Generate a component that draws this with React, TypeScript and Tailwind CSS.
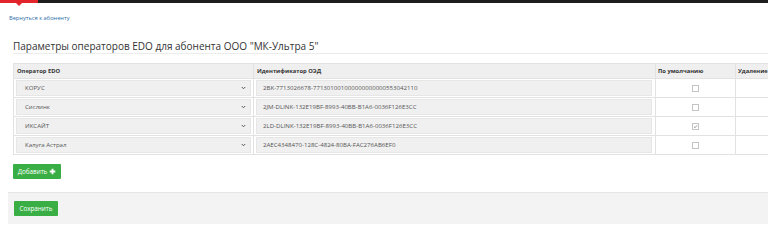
const rows = [
  { op: 'КОРУС', id: '2BK-7713026678-771301001000000000000553042110', def: false },
  { op: 'Сислинк', id: '2JM-DLINK-132E19BF-8993-40BB-B1A6-0036F126E3CC', def: false },
  { op: 'ИКСАЙТ', id: '2LD-DLINK-132E19BF-8993-40BB-B1A6-0036F126E3CC', def: true },
  { op: 'Калуга Астрал', id: '2AEC4348470-128C-4824-80BA-FAC276AB6EF0', def: false },
];

const Chevron = () => (
  <svg width="5" height="4" viewBox="0 0 10 8" className="shrink-0">
    <path d="M1.5 2 L5 5.5 L8.5 2" fill="none" stroke="#555" strokeWidth="2" />
  </svg>
);

const Check = ({ on }: { on: boolean }) => (
  <div className="w-[7px] h-[7px] border border-[#c4c4c4] bg-white flex items-center justify-center">
    {on && (
      <svg width="5" height="5" viewBox="0 0 10 10">
        <path d="M2 5.5 L4.2 7.5 L8 2.5" fill="none" stroke="#777" strokeWidth="1.4" />
      </svg>
    )}
  </div>
);

export default function App() {
  return (
    <div className="w-[768px] h-[242px] overflow-hidden bg-white font-['Open_Sans',sans-serif] text-[#333]">
      <div className="flex h-[3px]">
        <div className="w-[38px] bg-[#e3242b] relative">
          <span className="absolute left-[16px] top-[3px] w-0 h-0 border-l-[3px] border-r-[3px] border-t-[3px] border-l-transparent border-r-transparent border-t-[#e3242b]" />
        </div>
        <div className="flex-1 bg-[#1e1e1e]" />
      </div>

      <div className="pl-[9px] pt-[11px] text-[5.7px] leading-[8px] text-[#2c6ea8]">Вернуться к абоненту</div>

      <div className="ml-[13px] mt-[18px] border-b border-[#ececec] text-[10px] leading-[13px] text-[#333]">
        Параметры операторов EDO для абонента ООО "МК-Ультра 5"
      </div>

      <table className="ml-[13px] mt-[9px] border-collapse table-fixed w-[800px] text-[6.1px]">
        <colgroup>
          <col className="w-[240px]" />
          <col className="w-[402px]" />
          <col className="w-[80px]" />
          <col className="w-[78px]" />
        </colgroup>
        <thead>
          <tr className="bg-[#efefef] h-[15px] text-[5.8px]">
            <th className="border border-[#e2e2e2] text-left font-bold px-[3px] text-[#333]">Оператор EDO</th>
            <th className="border border-[#e2e2e2] text-left font-bold px-[3px] text-[#333]">Идентификатор ОЭД</th>
            <th className="border border-[#e2e2e2] text-left font-bold px-[2px] text-[#333]">По умолчанию</th>
            <th className="border border-[#e2e2e2] text-left font-bold px-[2px] text-[#333]">Удаление</th>
          </tr>
        </thead>
        <tbody>
          {rows.map((r) => (
            <tr key={r.id} className="h-[19px]">
              <td className="border border-[#e2e2e2] px-[2px] py-[1px]">
                <div className="h-[16px] bg-[#f0f0f0] border border-[#e6e6e6] flex items-center justify-between pl-[8px] pr-[4px] text-[#555]">
                  <span>{r.op}</span>
                  <Chevron />
                </div>
              </td>
              <td className="border border-[#e2e2e2] px-[2px] py-[1px]">
                <div className="h-[16px] w-[396px] bg-[#f0f0f0] border border-[#e6e6e6] flex items-center pl-[6px] text-[#555]">
                  {r.id}
                </div>
              </td>
              <td className="border border-[#e2e2e2]">
                <div className="flex justify-center">
                  <Check on={r.def} />
                </div>
              </td>
              <td className="border border-[#e2e2e2]" />
            </tr>
          ))}
        </tbody>
      </table>

      <button className="ml-[13px] mt-[9px] h-[15px] w-[48px] bg-[#38ae45] text-white text-[6.3px] flex items-center justify-center gap-[2px] rounded-[1px]">
        Добавить
        <svg width="7" height="7" viewBox="0 0 10 10">
          <path d="M5 1 V9 M1 5 H9" stroke="white" strokeWidth="2.6" />
        </svg>
      </button>

      <div className="ml-[8px] mt-[13px] h-[32px] bg-[#f3f3f3] border-t border-[#e6e6e6] pt-[8px] pl-[6px]">
        <button className="h-[15px] w-[44px] bg-[#38ae45] text-white text-[6.3px] flex items-center justify-center rounded-[1px]">
          Сохранить
        </button>
      </div>
    </div>
  );
}
